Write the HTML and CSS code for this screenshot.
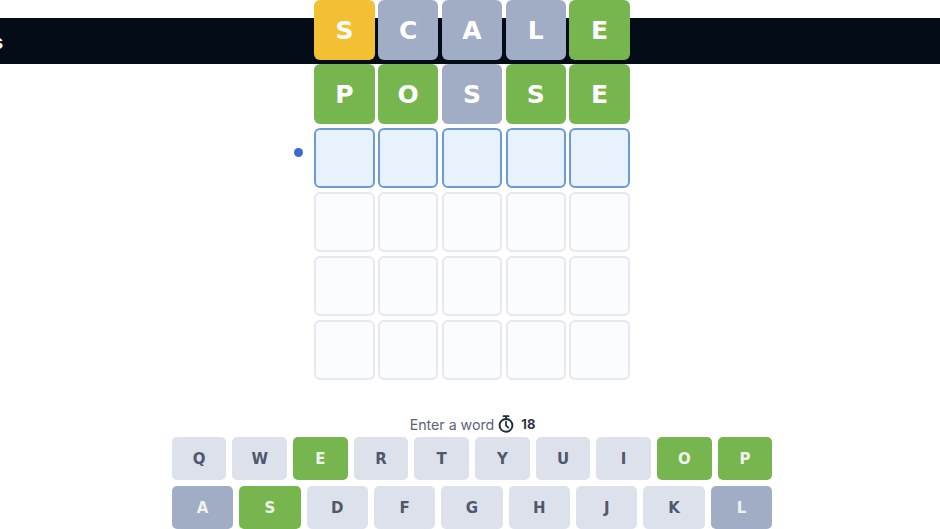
FILE: index.html
```html
<!DOCTYPE html>
<html lang="en">
<head>
<meta charset="utf-8">
<title>Word game</title>
<link rel="stylesheet" href="styles.css">
</head>
<body>
<div class="banner"><span class="banner-text">s</span></div>
<main class="game">
  <div class="board">
    <div class="tile gold">S</div><div class="tile grey">C</div><div class="tile grey">A</div><div class="tile grey">L</div><div class="tile green">E</div>
    <div class="tile green">P</div><div class="tile green">O</div><div class="tile grey">S</div><div class="tile green">S</div><div class="tile green">E</div>
    <div class="tile active"><span class="dot"></span></div><div class="tile active"></div><div class="tile active"></div><div class="tile active"></div><div class="tile active"></div>
    <div class="tile empty"></div><div class="tile empty"></div><div class="tile empty"></div><div class="tile empty"></div><div class="tile empty"></div>
    <div class="tile empty"></div><div class="tile empty"></div><div class="tile empty"></div><div class="tile empty"></div><div class="tile empty"></div>
    <div class="tile empty"></div><div class="tile empty"></div><div class="tile empty"></div><div class="tile empty"></div><div class="tile empty"></div>
  </div>
  <div class="status">
    <span>Enter a word</span>
    <svg class="timer" viewBox="0 0 18 18" width="18" height="18" aria-hidden="true">
      <path d="M6.5 1.2h5M9 1.2v2.6" fill="none" stroke="#1f2a3d" stroke-width="1.8" stroke-linecap="round"/>
      <circle cx="9" cy="10.4" r="6.4" fill="none" stroke="#1f2a3d" stroke-width="1.9"/>
      <path d="M9 6.6v4l2.4 2" fill="none" stroke="#1f2a3d" stroke-width="1.7" stroke-linecap="round"/>
    </svg>
    <strong>18</strong>
  </div>
  <div class="keyboard">
    <div class="keys keys-top">
      <div class="key">Q</div><div class="key">W</div><div class="key key-green">E</div><div class="key">R</div><div class="key">T</div><div class="key">Y</div><div class="key">U</div><div class="key">I</div><div class="key key-green">O</div><div class="key key-green">P</div>
    </div>
    <div class="keys keys-mid">
      <div class="key key-grey">A</div><div class="key key-green">S</div><div class="key">D</div><div class="key">F</div><div class="key">G</div><div class="key">H</div><div class="key">J</div><div class="key">K</div><div class="key key-grey">L</div>
    </div>
  </div>
</main>
</body>
</html>
```
FILE: styles.css
```css
* { box-sizing: border-box; }
html, body { margin: 0; height: 100%; }
body {
  position: relative;
  overflow: hidden;
  background: #fff;
  font-family: "Inter", "Liberation Sans", sans-serif;
}
.banner {
  position: absolute;
  top: 17.5px;
  left: 0;
  right: 0;
  height: 46.5px;
  overflow: hidden;
  background: #040c18;
}
.banner-text {
  position: absolute;
  left: -8px;
  top: 12px;
  color: #fff;
  font-size: 20px;
  font-weight: 700;
}
.game {
  position: relative;
  display: flex;
  flex-direction: column;
  align-items: center;
}
.board {
  display: grid;
  grid-template-columns: repeat(5, 60.25px);
  grid-auto-rows: 60.25px;
  column-gap: 3.5px;
  row-gap: 3.75px;
  margin-left: 4px;
}
.tile {
  position: relative;
  display: flex;
  align-items: center;
  justify-content: center;
  border-radius: 6px;
  color: #fff;
  font-family: "DejaVu Sans", "Inter", sans-serif;
  font-size: 25px;
  font-weight: 700;
}
.gold { background: #f4c033; }
.green { background: #77b64f; }
.grey { background: #a1adc5; }
.active { background: #e7f2fc; border: 2px solid #6b9ccf; }
.empty { background: #fbfcff; border: 2px solid #e6e8ec; }
.dot {
  position: absolute;
  left: -22px;
  top: 18px;
  width: 9px;
  height: 9px;
  border-radius: 50%;
  background: #3f68d0;
}
.status {
  display: flex;
  align-items: center;
  gap: 3px;
  height: 20px;
  margin-top: 34px;
  margin-left: 5px;
  color: #5a6475;
  font-size: 14.2px;
}
.status strong { margin-left: 3px; color: #2a3448; font-size: 13px; }
.keyboard {
  display: flex;
  flex-direction: column;
  gap: 6px;
  width: 600.5px;
  margin-top: 3px;
  margin-left: 4px;
}
.keys { display: grid; column-gap: 6px; grid-auto-rows: 43px; }
.keys-top { grid-template-columns: repeat(10, 1fr); }
.keys-mid { grid-template-columns: repeat(9, 1fr); }
.key {
  display: flex;
  align-items: center;
  justify-content: center;
  border-radius: 5px;
  background: #dde1ec;
  color: #4f596d;
  font-family: "DejaVu Sans", "Inter", sans-serif;
  font-size: 15px;
  font-weight: 700;
}
.key-green { background: #77b64f; color: #eef3ea; }
.key-grey { background: #a1adc5; color: #eef3ea; }
```
